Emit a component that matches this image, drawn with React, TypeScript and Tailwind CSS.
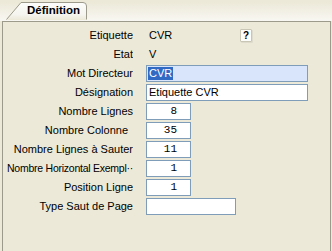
import React from "react";

type Row = { label: string; kind: "text" | "selected" | "wide" | "num" | "medium"; value: string; help?: boolean; cls?: string };

const rows: Row[] = [
  { label: "Etiquette", kind: "text", value: "CVR", help: true },
  { label: "Etat", kind: "text", value: "V" },
  { label: "Mot Directeur", kind: "selected", value: "CVR" },
  { label: "Désignation", kind: "wide", value: "Etiquette CVR" },
  { label: "Nombre Lignes", kind: "num", value: "8" },
  { label: "Nombre Colonne", kind: "num", value: "35", cls: "pr-[5px]" },
  { label: "Nombre Lignes à Sauter", kind: "num", value: "11" },
  { label: "Nombre Horizontal Exempl··", kind: "num", value: "1", cls: "text-[10.5px] tracking-[-0.25px]" },
  { label: "Position Ligne", kind: "num", value: "1" },
  { label: "Type Saut de Page", kind: "medium", value: "" },
];

function Value({ row }: { row: Row }) {
  if (row.kind === "text") {
    return (
      <div className="flex items-center h-full">
        <span className="w-[94px] pl-[3px]">{row.value}</span>
        {row.help && (
          <span className="w-[12px] h-[13px] flex items-center justify-center border border-[#c9c6b6] bg-[#fcfcfa] rounded-[1px] text-[10px] font-bold leading-none shadow-[1px_1px_0_#dedbcc]">
            ?
          </span>
        )}
      </div>
    );
  }
  if (row.kind === "selected") {
    return (
      <div className="w-[162px] h-[17px] border border-[#7f9db9] bg-[#d8e5fb] flex items-center pl-[1px]">
        <span className="bg-[#316ac5] text-white px-[1px] h-[13px] leading-[13px]">{row.value}</span>
      </div>
    );
  }
  if (row.kind === "wide") {
    return (
      <div className="w-[162px] h-[17px] border border-[#7f9db9] bg-white flex items-center pl-[2px]">
        {row.value}
      </div>
    );
  }
  if (row.kind === "medium") {
    return <div className="w-[90px] h-[17px] border border-[#7f9db9] bg-white" />;
  }
  return (
    <div
      className="w-[45px] h-[17px] border border-[#7f9db9] bg-white flex items-center justify-end pr-[13px] text-[11px]"
      style={{ fontFamily: '"Liberation Mono", monospace' }}
    >
      {row.value}
    </div>
  );
}

export default function App() {
  return (
    <div
      className="w-[332px] h-[251px] bg-[#ece9d8] text-[11px] text-black overflow-hidden"
      style={{ fontFamily: '"Liberation Sans", Arial, sans-serif' }}
    >
      <div className="h-[19px] bg-gradient-to-b from-[#ece9d8] to-[#f8f7f2] pl-[6px]">
        <div className="relative z-10 w-[81px] h-[18px] mt-[2px] flex items-center justify-center pl-[14px]">
          <svg className="absolute inset-0" width="81" height="18" viewBox="0 0 81 18">
            <defs>
              <linearGradient id="tabg" x1="0" y1="0" x2="0" y2="1">
                <stop offset="0" stopColor="#fdfdfc" />
                <stop offset="0.7" stopColor="#f5f4ee" />
                <stop offset="1" stopColor="#ece9d8" />
              </linearGradient>
            </defs>
            <path d="M0.5 18 L15 0.5 L77 0.5 Q80.5 0.5 80.5 4 L80.5 18 Z" fill="url(#tabg)" />
            <path d="M0.5 17.5 L15 0.5 L77 0.5 Q80.5 0.5 80.5 4 L80.5 17.5" fill="none" stroke="#9c9a8a" strokeWidth="1" />
          </svg>
          <span className="relative font-bold text-[11.5px] leading-none">Définition</span>
        </div>
      </div>
      <div className="ml-[2px] w-[329px] h-[231px] border border-[#9c9a8a] bg-[#ece9d8] pt-[4px]">
        {rows.map((row) => (
          <div key={row.label} className="flex h-[19px] items-center">
            <div className={`w-[130px] text-right whitespace-nowrap overflow-hidden ${row.cls ?? ""}`}>{row.label}</div>
            <div className="ml-[13px] h-full flex items-center">
              <Value row={row} />
            </div>
          </div>
        ))}
      </div>
    </div>
  );
}
